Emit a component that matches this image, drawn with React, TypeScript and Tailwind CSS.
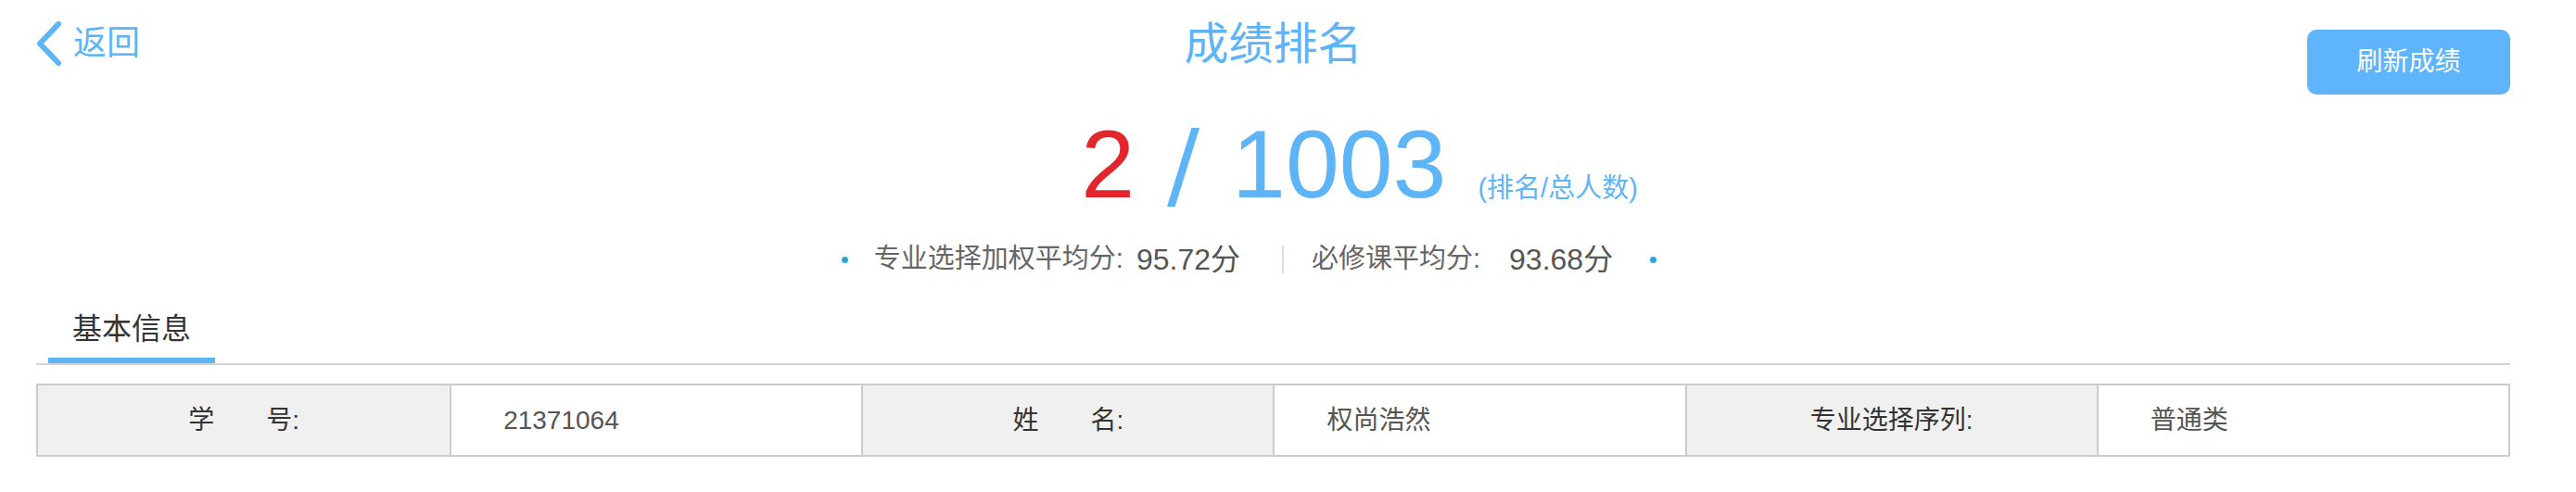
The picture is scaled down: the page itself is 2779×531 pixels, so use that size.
import React from "react";

const cjk = "font-['Liberation_Sans','Noto_Sans_CJK_SC',sans-serif]";

interface InfoItem {
  label: string;
  value: string;
}

const info: InfoItem[] = [
  { label: "学\u3000\u3000号:", value: "21371064" },
  { label: "姓\u3000\u3000名:", value: "权尚浩然" },
  { label: "专业选择序列:", value: "普通类" },
];

const App: React.FC = () => {
  return (
    <div className={`min-h-[531px] bg-white ${cjk}`}>
      <div className="ml-[39px] w-[2669px]">
        {/* header */}
        <div className="grid grid-cols-[1fr_auto_1fr] items-start">
          <a className="mt-[23px] flex items-center text-[#5db4f6] cursor-pointer justify-self-start">
            <svg width="28" height="48" viewBox="0 0 28 48" fill="none">
              <polyline
                points="24,3 4,24 24,45"
                stroke="#5db4f6"
                strokeWidth="6"
                strokeLinecap="round"
                strokeLinejoin="round"
              />
            </svg>
            <span className="ml-[12px] text-[36px] leading-[48px]">返回</span>
          </a>
          <h1 className="pt-[24px] text-[48px] leading-[48px] text-[#5db4f6] font-normal">
            成绩排名
          </h1>
          <button className="justify-self-end mt-[32px] h-[70px] w-[219px] rounded-[10px] bg-[#5eb5fb] text-white text-[28px]">
            刷新成绩
          </button>
        </div>

        {/* rank */}
        <div className="mt-[23px] flex items-baseline justify-center pl-[186px]">
          <span className="font-['Liberation_Sans',sans-serif] text-[104px] leading-none text-[#e3262b]">
            2
          </span>
          <span className="ml-[35px] font-['DejaVu_Sans',sans-serif] text-[104px] leading-none text-[#5db4f6]">
            /
          </span>
          <span className="ml-[35px] font-['Liberation_Sans',sans-serif] text-[104px] leading-none text-[#5db4f6]">
            1003
          </span>
          <span className="ml-[34px] text-[29px] text-[#5db4f6]">(排名/总人数)</span>
        </div>

        {/* averages */}
        <div className="mt-[31px] flex h-[40px] items-center justify-center pr-[52px] text-[29px]">
          <span className="h-[7px] w-[7px] rounded-full bg-[#2ba4d8]" />
          <span className="ml-[28px] text-[#666]">专业选择加权平均分:</span>
          <span className="ml-[14px] text-[32px] text-[#555]">95.72分</span>
          <span className="ml-[45px] h-[30px] w-[2px] bg-[#ddd]" />
          <span className="ml-[30px] text-[#666]">必修课平均分:</span>
          <span className="ml-[31px] text-[32px] text-[#555]">93.68分</span>
          <span className="ml-[40px] h-[7px] w-[7px] rounded-full bg-[#2ba4d8]" />
        </div>

        {/* tabs */}
        <div className="mt-[31px] flex border-b-2 border-[#d4d4d4]">
          <div className="ml-[13px] border-b-[6px] border-[#5db4f6] px-[26px] pb-[7px] text-[32px] leading-[48px] text-[#333]">
            基本信息
          </div>
        </div>

        {/* table */}
        <div className="mt-[20px] grid h-[79px] grid-cols-6 border-2 border-[#ccc] text-[28px]">
          {info.map((item, i) => (
            <React.Fragment key={item.label}>
              <div
                className={`flex items-center justify-center bg-[#f0f0f0] text-[#333] ${
                  i > 0 ? "border-l-2 border-[#ccc]" : ""
                }`}
              >
                {item.label}
              </div>
              <div className="flex items-center border-l-2 border-[#ccc] pl-[56px] text-[#555]">
                {item.value}
              </div>
            </React.Fragment>
          ))}
        </div>
      </div>
    </div>
  );
};

export default App;
